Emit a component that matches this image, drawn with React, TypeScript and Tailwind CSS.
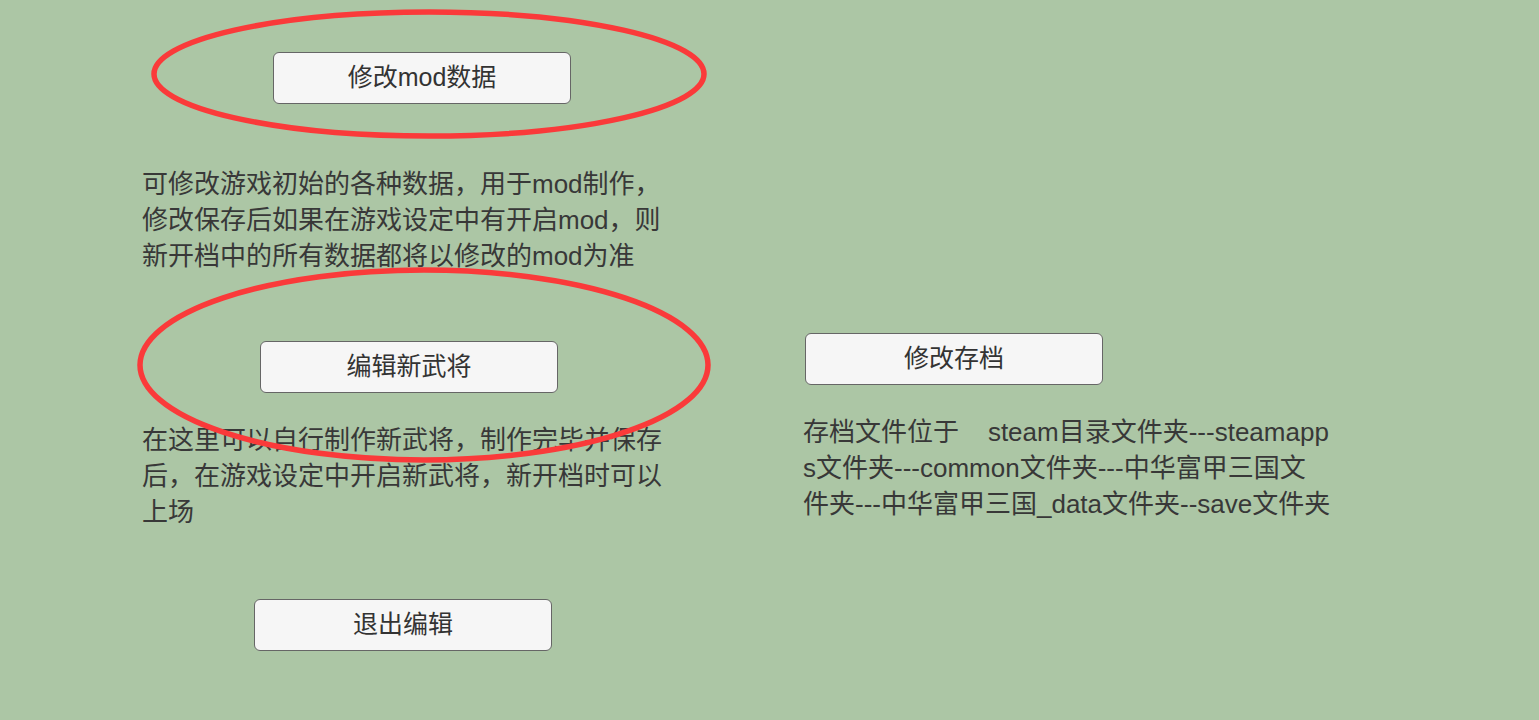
const font = { fontFamily: '"Liberation Sans", "Noto Sans CJK SC", sans-serif' };

function GameButton({ label, className }: { label: string; className: string }) {
  return (
    <button
      className={`flex h-[52px] w-[298px] items-center justify-center rounded-[6px] border border-[#666666] bg-[#f6f6f6] text-[25px] text-[#333333] ${className}`}
    >
      {label}
    </button>
  );
}

function Lines({ lines, className }: { lines: string[]; className: string }) {
  return (
    <div className={`text-[26px] leading-[36px] text-[#383838] whitespace-pre ${className}`}>
      {lines.map((line) => (
        <div key={line}>{line}</div>
      ))}
    </div>
  );
}

export default function App() {
  return (
    <div className="relative flex min-h-[720px] w-full overflow-hidden bg-[#acc6a5]" style={font}>
      <div className="flex w-[661px] flex-col pl-[142px] pt-[52px]">
        <GameButton label="修改mod数据" className="ml-[131px]" />
        <Lines
          className="mt-[62px]"
          lines={[
            "可修改游戏初始的各种数据，用于mod制作，",
            "修改保存后如果在游戏设定中有开启mod，则",
            "新开档中的所有数据都将以修改的mod为准",
          ]}
        />
        <GameButton label="编辑新武将" className="ml-[118px] mt-[67px]" />
        <Lines
          className="mt-[29px]"
          lines={[
            "在这里可以自行制作新武将，制作完毕并保存",
            "后，在游戏设定中开启新武将，新开档时可以",
            "上场",
          ]}
        />
        <GameButton label="退出编辑" className="ml-[112px] mt-[69px]" />
      </div>

      <div className="flex flex-col pl-[142px] pt-[333px]">
        <GameButton label="修改存档" className="ml-[2px]" />
        <Lines
          className="mt-[29px]"
          lines={[
            "存档文件位于    steam目录文件夹---steamapp",
            "s文件夹---common文件夹---中华富甲三国文",
            "件夹---中华富甲三国_data文件夹--save文件夹",
          ]}
        />
      </div>

      {/* red annotation circles drawn over the screenshot */}
      <svg className="pointer-events-none absolute left-0 top-0" width="1539" height="720">
        <ellipse cx="429" cy="74" rx="275" ry="62" fill="none" stroke="#fa3a3a" strokeWidth="5.5" />
        <ellipse cx="424" cy="365" rx="284" ry="95" fill="none" stroke="#fa3a3a" strokeWidth="5.5" />
      </svg>
    </div>
  );
}
